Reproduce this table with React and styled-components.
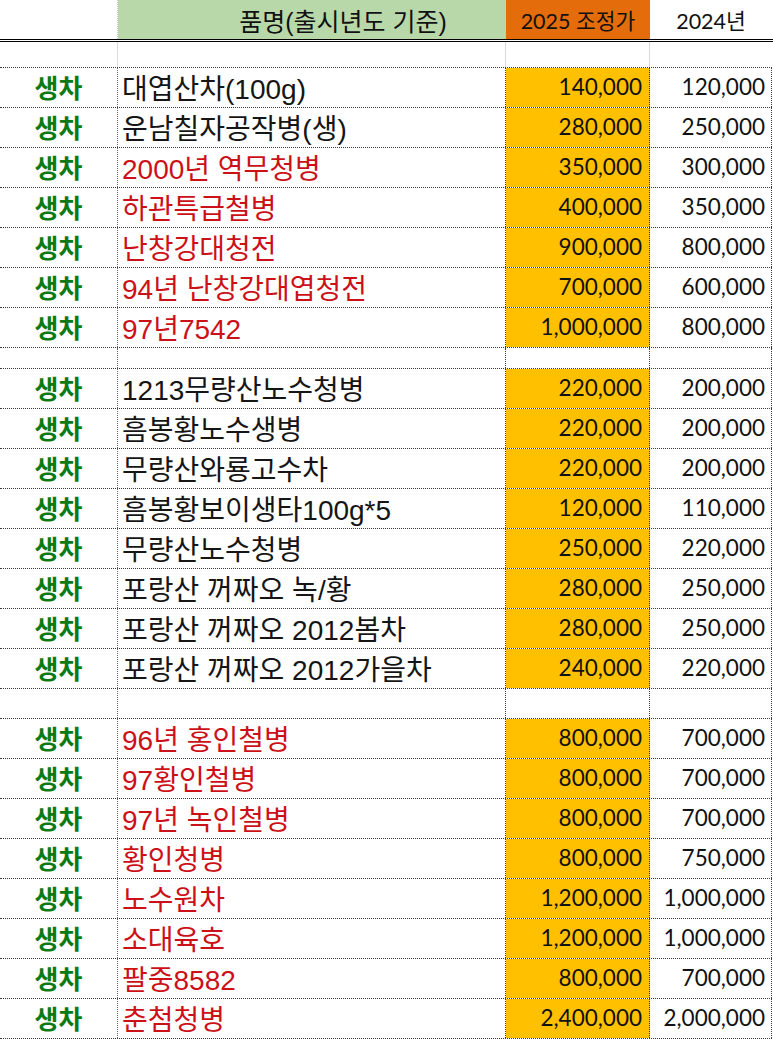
import React from "react";
import styled, { createGlobalStyle } from "styled-components";

const GlobalStyle = createGlobalStyle`
  html, body {
    margin: 0;
    padding: 0;
    background: #ffffff;
  }
  * {
    box-sizing: border-box;
  }
`;

const Sheet = styled.div`
  display: flex;
  flex-direction: column;
  width: 773px;
  font-family: "Noto Sans CJK KR", sans-serif;
  color: #111;
`;

const Row = styled.div`
  display: grid;
  grid-template-columns: 118px 388px 144px 122px;
  height: ${(p) => p.$height}px;
  width: ${(p) => (p.$full ? "773px" : "772px")};
  border-bottom: ${(p) => p.$line || "1px dotted #3a3a3a"};
`;

const HeadCell = styled.div`
  display: flex;
  align-items: center;
  justify-content: center;
  padding-left: ${(p) => p.$indent || 0}px;
  background: ${(p) => p.$bg || "#ffffff"};
  border-right: ${(p) => p.$edge || "none"};
  font-family: ${(p) =>
    p.$num ? '"Lato", "Noto Sans CJK KR", sans-serif' : '"Liberation Sans", "Noto Sans CJK KR", sans-serif'};
  font-size: ${(p) => (p.$num ? 21.5 : 25)}px;
  color: #111;
  white-space: nowrap;
`;

const GapCell = styled.div`
  background: #ffffff;
  border-right: ${(p) => p.$edge || "1px dotted #3a3a3a"};
`;

const TypeCell = styled.div`
  display: flex;
  align-items: center;
  justify-content: center;
  border-right: 1px dotted #6a6a6a;
  font-size: 26px;
  font-weight: 700;
  color: #0b7a12;
  padding-bottom: 2px;
`;

const NameCell = styled.div`
  display: flex;
  align-items: center;
  padding-left: 4px;
  border-right: 1px dotted #3a3a3a;
  font-family: "Liberation Sans", "Noto Sans CJK KR", sans-serif;
  font-size: 28px;
  color: ${(p) => (p.$red ? "#cc1018" : "#151515")};
  white-space: nowrap;
  overflow: hidden;
  padding-bottom: 2px;
`;

const PriceCell = styled.div`
  display: flex;
  align-items: center;
  justify-content: flex-end;
  padding-right: ${(p) => (p.$gold ? 7 : 6)}px;
  background: ${(p) => (p.$gold ? "#ffc000" : "#ffffff")};
  border-right: 1px dotted #3a3a3a;
  font-family: "Lato", sans-serif;
  font-size: 22.5px;
  color: #111;
  padding-bottom: 2px;
`;

const sections = [
  [
    ["대엽산차(100g)", false, "140,000", "120,000"],
    ["운남칠자공작병(생)", false, "280,000", "250,000"],
    ["2000년 역무청병", true, "350,000", "300,000"],
    ["하관특급철병", true, "400,000", "350,000"],
    ["난창강대청전", true, "900,000", "800,000"],
    ["94년 난창강대엽청전", true, "700,000", "600,000"],
    ["97년7542", true, "1,000,000", "800,000"],
  ],
  [
    ["1213무량산노수청병", false, "220,000", "200,000"],
    ["흠봉황노수생병", false, "220,000", "200,000"],
    ["무량산와룡고수차", false, "220,000", "200,000"],
    ["흠봉황보이생타100g*5", false, "120,000", "110,000"],
    ["무량산노수청병", false, "250,000", "220,000"],
    ["포랑산 꺼짜오 녹/황", false, "280,000", "250,000"],
    ["포랑산 꺼짜오 2012봄차", false, "280,000", "250,000"],
    ["포랑산 꺼짜오 2012가을차", false, "240,000", "220,000"],
  ],
  [
    ["96년 홍인철병", true, "800,000", "700,000"],
    ["97황인철병", true, "800,000", "700,000"],
    ["97년 녹인철병", true, "800,000", "700,000"],
    ["황인청병", true, "800,000", "750,000"],
    ["노수원차", true, "1,200,000", "1,000,000"],
    ["소대육호", true, "1,200,000", "1,000,000"],
    ["팔중8582", true, "800,000", "700,000"],
    ["춘첨청병", true, "2,400,000", "2,000,000"],
  ],
];

const gapHeights = [21, 30];

function BlankRow({ height }) {
  return (
    <Row $height={height}>
      <GapCell $edge="1px dotted #6a6a6a" />
      <GapCell />
      <GapCell />
      <GapCell />
    </Row>
  );
}

function TeaRow({ item }) {
  const [name, red, price2025, price2024] = item;
  return (
    <Row $height={40}>
      <TypeCell>생차</TypeCell>
      <NameCell $red={red}>{name}</NameCell>
      <PriceCell $gold>{price2025}</PriceCell>
      <PriceCell>{price2024}</PriceCell>
    </Row>
  );
}

export default function App() {
  const lightEdge = "1px solid #d8dbe6";
  return (
    <>
      <GlobalStyle />
      <Sheet>
        <Row $height={42} $full $line="3px double #000">
          <HeadCell $edge="1px dotted #c8c8c8" />
          <HeadCell $bg="#b9d8aa" $indent={62}>품명(출시년도 기준)</HeadCell>
          <HeadCell $bg="#e46c0a" $num>2025 조정가</HeadCell>
          <HeadCell $num>2024년</HeadCell>
        </Row>
        <Row $height={26}>
          <GapCell $edge={lightEdge} />
          <GapCell $edge={lightEdge} />
          <GapCell $edge={lightEdge} />
          <GapCell $edge="none" />
        </Row>
        {sections.map((rows, i) => (
          <React.Fragment key={i}>
            {rows.map((item) => (
              <TeaRow key={item[0]} item={item} />
            ))}
            {i < gapHeights.length && <BlankRow height={gapHeights[i]} />}
          </React.Fragment>
        ))}
      </Sheet>
    </>
  );
}
